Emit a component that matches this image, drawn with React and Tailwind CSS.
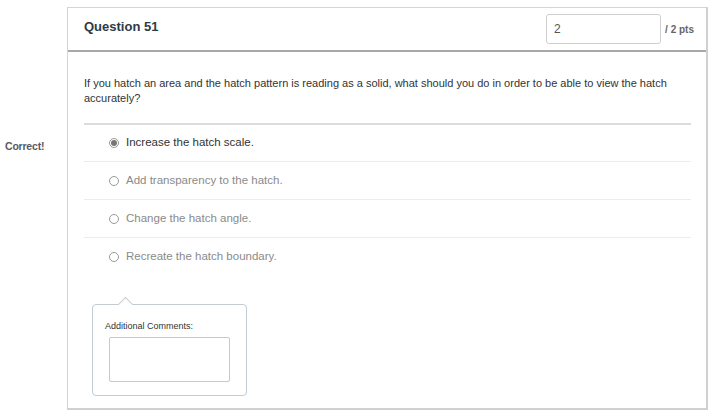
export default function App() {
  const answers = [
    { text: 'Increase the hatch scale.', selected: true },
    { text: 'Add transparency to the hatch.' },
    { text: 'Change the hatch angle.' },
    { text: 'Recreate the hatch boundary.' },
  ];

  return (
    <div className="w-[715px] h-[416px] bg-white flex pt-[7px] font-['Liberation_Sans',Arial,sans-serif]">
      {/* left gutter with result label */}
      <div className="w-[67px] shrink-0 pt-[126px] pl-[5px]">
        <span className="text-[10.5px] font-bold text-[#5a5a5a] tracking-[-0.2px]">Correct!</span>
      </div>

      <div className="w-[641px] h-[403px] border border-[#d4d4d4] border-r-2 border-b-2 border-r-[#d0d0d0] border-b-[#d0d0d0] flex flex-col">
        {/* header */}
        <div className="h-[44px] shrink-0 flex items-center justify-between pl-[16px] pr-[12px] border-b-2 border-[#a8a8a8]">
          <h2 className="text-[13px] font-bold text-[#2d3b45] -mt-[4px]">Question 51</h2>
          <div className="flex items-center gap-[4px]">
            <div className="w-[115px] h-[30px] border border-[#cfcfcf] rounded-[3px] flex items-center pl-[7px] text-[12px] text-[#555]">
              2
            </div>
            <span className="text-[10px] font-bold text-[#666]">/ 2 pts</span>
          </div>
        </div>

        {/* body */}
        <div className="flex-1 pl-[16px] pr-[15px] pt-[24px]">
          <p className="text-[11px] leading-[15px] text-[#333] pr-[10px]">
            If you hatch an area and the hatch pattern is reading as a solid, what should you do in order to be able to view the hatch accurately?
          </p>

          <div className="mt-[17px] border-t-2 border-[#dcdcdc]">
            {answers.map((a, i) => (
              <div
                key={i}
                className={
                  'flex items-center pl-[25px] gap-[7px] ' +
                  (i === 0 ? 'h-[37px] ' : 'h-[38px] ') +
                  (i < answers.length - 1 ? 'border-b border-[#ececec]' : '')
                }
              >
                <span className="w-[10px] h-[10px] rounded-full border border-[#999] flex items-center justify-center bg-white">
                  {a.selected && <span className="w-[6px] h-[6px] rounded-full bg-[#777]" />}
                </span>
                <span className={'text-[11.5px] ' + (a.selected ? 'text-[#333]' : 'text-[#8a8a8a]')}>{a.text}</span>
              </div>
            ))}
          </div>

          {/* comments popover */}
          <div className="relative mt-[28px] ml-[8px] w-[155px] h-[92px] border border-[#c3cbd3] rounded-[4px] pl-[12px] pt-[16px]">
            <span className="absolute -top-[6px] left-[27px] w-[11px] h-[11px] rotate-45 bg-white border-l border-t border-[#c3cbd3]" />
            <div className="text-[9px] leading-[11px] text-[#333]">Additional Comments:</div>
            <div className="mt-[5px] ml-[4px] w-[121px] h-[45px] border border-[#c8c8c8] rounded-[2px]" />
          </div>
        </div>
      </div>
    </div>
  );
}
